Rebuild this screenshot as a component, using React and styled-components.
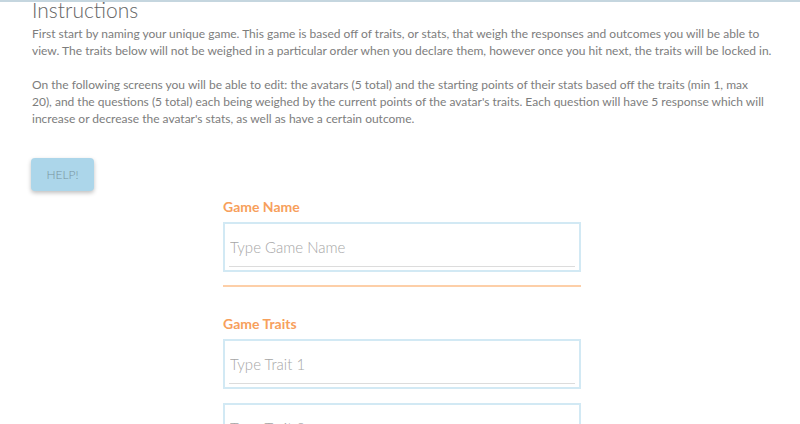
import React from "react";
import styled, { createGlobalStyle } from "styled-components";

const Global = createGlobalStyle`
  html, body { margin: 0; padding: 0; background: #fff; }
  body { font-family: Lato, "Noto Sans", sans-serif; overflow: hidden; }
`;

const Page = styled.div`
  border-top: 2px solid #c5d6df;
  height: 422px;
  overflow: hidden;
`;

const Instructions = styled.section`
  padding: 0 22px 0 32px;
`;

const Heading = styled.h2`
  margin: -6px 0 0;
  font-size: 21px;
  font-weight: 300;
  color: #666;
  line-height: 28px;
`;

const Para = styled.p`
  margin: ${(p) => (p.$first ? "1px" : "0")} 0 17px;
  font-size: 12px;
  line-height: 17px;
  color: #7d7d7d;
  letter-spacing: 0;
`;

const HelpButton = styled.button`
  margin: 14px 0 0 31px;
  width: 63px;
  height: 33px;
  border: none;
  border-radius: 4px;
  background: #acd6ea;
  box-shadow: 0 2px 4px rgba(0, 0, 0, 0.25);
  color: #7893a0;
  font-family: Lato, "Noto Sans", sans-serif;
  font-size: 12px;
  font-weight: 300;
`;

const Form = styled.form`
  width: 358px;
  margin: 7px 0 0 223px;
  display: flex;
  flex-direction: column;
`;

const Label = styled.h3`
  margin: 0 0 6px;
  font-size: 14px;
  line-height: 18px;
  font-weight: 700;
  color: #f7a05c;
`;

const Box = styled.div`
  box-sizing: border-box;
  height: 50px;
  border: 2px solid #d2e9f4;
  padding: 0 4px;
  margin-bottom: ${(p) => p.$mb || 0}px;
  display: flex;
  align-items: flex-start;
`;

const Field = styled.input`
  flex: 1;
  min-width: 0;
  border: none;
  border-bottom: 1px solid #dcdcdc;
  margin: 0;
  padding: 4px 0 0 1px;
  height: 43px;
  box-sizing: border-box;
  background: transparent;
  font-family: Lato, "Noto Sans", sans-serif;
  font-size: 15px;
  font-weight: 300;
  outline: none;
  &::placeholder { color: #a6a6a6; }
`;

const Divider = styled.hr`
  margin: 13px 0 28px;
  border: none;
  border-top: 2px solid #fdcfa8;
  height: 0;
`;

export default function App() {
  return (
    <>
      <Global />
      <Page>
        <Instructions>
          <Heading>Instructions</Heading>
          <Para $first>
            First start by naming your unique game. This game is based off of traits, or stats, that weigh the responses and outcomes you will be able to view. The traits below will not be weighed in a particular order when you declare them, however once you hit next, the traits will be locked in.
          </Para>
          <Para>
            On the following screens you will be able to edit: the avatars (5 total) and the starting points of their stats based off the traits (min 1, max
            <br />
            20), and the questions (5 total) each being weighed by the current points of the avatar's traits. Each question will have 5 response which will increase or decrease the avatar's stats, as well as have a certain outcome.
          </Para>
        </Instructions>
        <HelpButton type="button">HELP!</HelpButton>
        <Form>
          <Label>Game Name</Label>
          <Box>
            <Field placeholder="Type Game Name" />
          </Box>
          <Divider />
          <Label>Game Traits</Label>
          <Box $mb={14}>
            <Field placeholder="Type Trait 1" />
          </Box>
          <Box $mb={14}>
            <Field placeholder="Type Trait 2" />
          </Box>
        </Form>
      </Page>
    </>
  );
}
